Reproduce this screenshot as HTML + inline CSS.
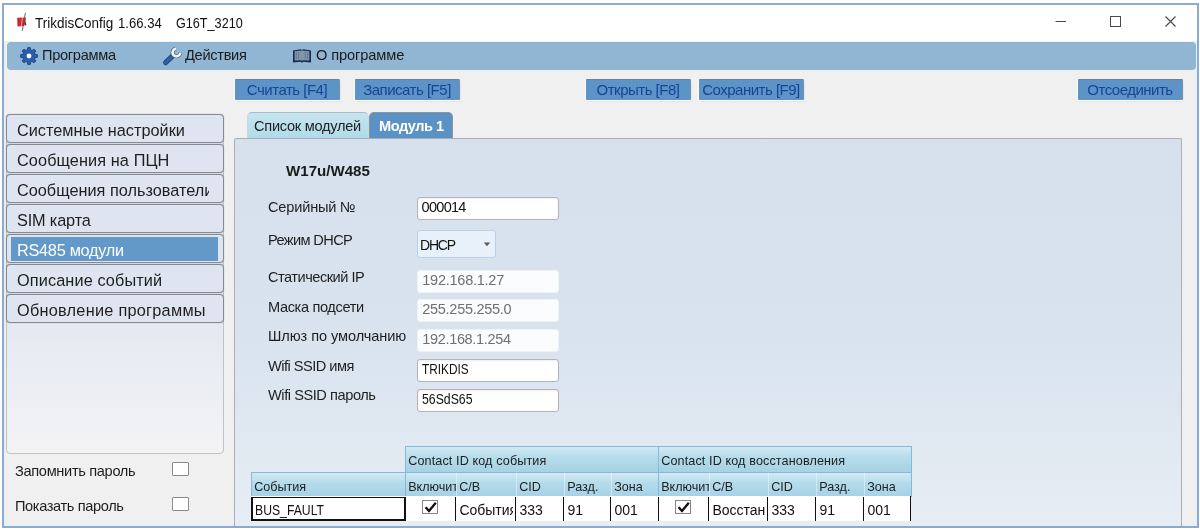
<!DOCTYPE html>
<html>
<head>
<meta charset="utf-8">
<title>TrikdisConfig</title>
<style>
*{box-sizing:border-box;margin:0;padding:0}
html,body{width:1200px;height:532px;overflow:hidden;background:#fff}
#root{position:absolute;left:0;top:0;width:1200px;height:532px;background:#fff;filter:blur(.4px)}
body{font-family:"Liberation Sans",sans-serif;font-size:14px;color:#1e1e1e;position:relative}
.abs{position:absolute;white-space:nowrap}
#win{left:2px;top:3px;width:1197px;height:525px;border:2px solid #8babcf;background:#f0f0f0;box-shadow:inset 0 0 0 1px #e4eff9}
#title{left:4px;top:5px;width:1193px;height:36px;background:#fff}
#ttext,.tt{top:15px;font-size:14.5px;line-height:16px;color:#111;white-space:pre}
#ttext{left:35px}
#menubar{left:7px;top:42px;width:1189px;height:28px;background:#91b6d3;border-radius:4px}
.mi{top:47px;font-size:14.6px;letter-spacing:-.3px;line-height:16px;color:#1b1b1b}
.tbtn{top:79px;height:21px;background:#5d94c7;border-top:1px solid #6e8199;border-right:1px solid #7f90a6;box-shadow:-1px 0 0 #fafafa,0 1px 0 #fdfdfd,1px 2px 1px #e2e4e7;color:#1a4394;font-size:15px;letter-spacing:-.5px;line-height:19px;text-align:center;border-radius:1px}
.sb{left:6px;width:218px;height:29px;background:#dfe5f0;border:1px solid #858a90;border-radius:4px;font-size:16.3px;line-height:29px;padding-top:1px;padding-left:10px;color:#1e1e1e;overflow:hidden;box-shadow:0 0 1px rgba(60,60,70,.45)}
.sb.sel{background:#dfe5f0 linear-gradient(#6299c9,#6299c9) no-repeat 4px 2px/207px 24px;color:#fff}
#sbpanel{left:6px;top:114px;width:218px;height:340px;border:1px solid #bfc3c8;border-radius:4px;background:linear-gradient(#e4e9f2 0,#e4e9f2 62%,#f3f3f4 100%)}
.lbl{left:268px;font-size:14.6px;letter-spacing:-.15px;line-height:16px;color:#1e1e1e}
.inp{left:417px;width:142px;height:23px;background:#fff;border:1px solid #b2b4b9;border-radius:3px;box-shadow:inset 0 1px 2px rgba(0,0,0,.07);font-size:14.5px;letter-spacing:-.74px;line-height:18px;padding-left:3.6px;color:#111}
.sx{display:inline-block;transform-origin:left center}
.inp.dis{box-shadow:none;border-color:#eef2f7;background:#fbfcfd;color:#707070;padding-left:4.3px;line-height:18.5px}
.cb{left:172px;width:17px;height:15px;background:#fff;border:1px solid #8b8b8b;border-radius:1px}
.th{background:linear-gradient(#d2e9f4,#b4dbea 45%,#a6d2e5);border:1px solid #86b9d6;font-size:12.6px;line-height:29.4px;color:#1e1e1e;overflow:hidden;padding-left:2.2px}
.td{top:497px;height:24px;background:#fff;border-left:1px solid #111;font-size:14px;line-height:27.5px;color:#111;overflow:hidden;padding-left:3.4px;clip-path:inset(0 2px 0 0)}
.chk{width:16px;height:14px;border:1px solid #868686;background:#fff;top:500px}
</style>
</head>
<body>
<div id="root">
<div id="win" class="abs"></div>
<div id="title" class="abs"></div>

<!-- app icon -->
<svg class="abs" style="left:16px;top:12px" width="12" height="20" viewBox="0 0 12 20">
  <path d="M1.2 5.7 L9.8 5.6 L9.6 10.5 L8 14.1 L1.5 14.4 Z" fill="#d3232c"/>
  <path d="M6.4 5.8 L5.2 14.4" stroke="#f0c4c6" stroke-width=".8" fill="none"/>
  <path d="M9.2 9.4 L10.5 12.8 L8.6 13.8 Z" fill="#3a3a3a"/>
  <path d="M9.4 0.8 L6.3 18.8" stroke="#555" stroke-width=".9" fill="none"/>
</svg>
<div id="ttext" class="abs"><span class="sx" style="transform:scaleX(.93)">TrikdisConfig</span></div>
<div id="ttext2" class="abs tt" style="left:118.4px"><span class="sx" style="transform:scaleX(.905)">1.66.34</span></div>
<div id="ttext3" class="abs tt" style="left:175.7px"><span class="sx" style="transform:scaleX(.871)">G16T_3210</span></div>

<!-- window controls -->
<svg class="abs" style="left:1050px;top:10px" width="140" height="24" viewBox="0 0 140 24">
  <path d="M5.5 11.5 H16" stroke="#4a4a4a" stroke-width="1" fill="none"/>
  <rect x="60.5" y="6.5" width="10" height="10" stroke="#4a4a4a" stroke-width="1" fill="none"/>
  <path d="M115.5 6.5 L125.5 16.5 M125.5 6.5 L115.5 16.5" stroke="#4a4a4a" stroke-width="1.1" fill="none"/>
</svg>

<!-- menu bar -->
<div id="menubar" class="abs"></div>
<svg class="abs" style="left:18.7px;top:46.2px" width="20" height="20" viewBox="0 0 20 20">
  <path d="M8.32 3.93 L8.65 1.61 L11.35 1.61 L11.68 3.93 L13.11 4.52 L14.98 3.11 L16.89 5.02 L15.48 6.89 L16.07 8.32 L18.39 8.65 L18.39 11.35 L16.07 11.68 L15.48 13.11 L16.89 14.98 L14.98 16.89 L13.11 15.48 L11.68 16.07 L11.35 18.39 L8.65 18.39 L8.32 16.07 L6.89 15.48 L5.02 16.89 L3.11 14.98 L4.52 13.11 L3.93 11.68 L1.61 11.35 L1.61 8.65 L3.93 8.32 L4.52 6.89 L3.11 5.02 L5.02 3.11 L6.89 4.52 Z" fill="#2b5eaa" stroke="#1f4682" stroke-width=".9" stroke-linejoin="round"/>
  <circle cx="10" cy="10" r="2.4" fill="#fdfdfe"/>
</svg>
<div class="abs mi" style="left:42px">Программа</div>
<svg class="abs" style="left:160px;top:44px" width="24" height="24" viewBox="0 0 24 24">
  <path d="M5.6 18.6 L13.2 11.4" stroke="#1a3d70" stroke-width="5" stroke-linecap="round" fill="none"/>
  <path d="M5.6 18.6 L13.2 11.4" stroke="#2d62a8" stroke-width="3.4" stroke-linecap="round" fill="none"/>
  <path d="M16.1 4.6 A3.9 3.9 0 1 0 20.3 8.8" stroke="#3b4c62" stroke-width="3.8" fill="none"/>
  <path d="M16.1 4.6 A3.9 3.9 0 1 0 20.3 8.8" stroke="#f1f3f6" stroke-width="2.6" fill="none"/>
</svg>
<div class="abs mi" style="left:185px">Действия</div>
<svg class="abs" style="left:292px;top:48px" width="20" height="16" viewBox="0 0 20 16">
  <path d="M1 2.4 L8.6 1.2 L10 2 L11.4 1.2 L19 2.4 L19 14.4 L11.4 13.8 L10 14.8 L8.6 13.8 L1 14.4 Z" fill="#1b2944"/>
  <path d="M2.6 3.2 L9.5 2.6 L9.5 12.2 L2.6 12.4 Z" fill="#7e94ac"/>
  <path d="M10.5 2.6 L17.4 3.2 L17.4 12.4 L10.5 12.2 Z" fill="#7e94ac"/>
  <path d="M10 2.6 V12.6" stroke="#c0d0df" stroke-width="1"/>
  <path d="M4.4 4.5 V11 M6.6 4.3 V11 M13.4 4.3 V11 M15.6 4.5 V11" stroke="#63798f" stroke-width=".9"/>
</svg>
<div class="abs mi" style="left:316px;letter-spacing:-.1px">О программе</div>

<!-- toolbar buttons -->
<div class="abs tbtn" style="left:235px;width:105px">Считать [F4]</div>
<div class="abs tbtn" style="left:355px;width:105px">Записать [F5]</div>
<div class="abs tbtn" style="left:586px;width:105px">Открыть [F8]</div>
<div class="abs tbtn" style="left:699px;width:105px">Сохранить [F9]</div>
<div class="abs tbtn" style="left:1078px;width:105px">Отсоединить</div>

<!-- sidebar -->
<div id="sbpanel" class="abs"></div>
<div class="abs sb" style="top:114px">Системные настройки</div>
<div class="abs sb" style="top:144px;letter-spacing:.09px">Сообщения на ПЦН</div>
<div class="abs sb" style="top:174px"><span style="display:block;width:192px;overflow:hidden">Сообщения пользователи</span></div>
<div class="abs sb" style="top:204px;letter-spacing:-.15px">SIM карта</div>
<div class="abs sb sel" style="top:234px;letter-spacing:-.27px">RS485 модули</div>
<div class="abs sb" style="top:264px;letter-spacing:.11px">Описание событий</div>
<div class="abs sb" style="top:294px;letter-spacing:.26px">Обновление программы</div>

<div class="abs" style="left:15px;top:462.6px;font-size:14.6px;letter-spacing:-.33px;line-height:16px">Запомнить пароль</div>
<div class="abs cb" style="top:462px;height:14px"></div>
<div class="abs" style="left:15px;top:498.2px;font-size:14.6px;letter-spacing:-.37px;line-height:16px">Показать пароль</div>
<div class="abs cb" style="top:497px;height:14px"></div>

<!-- tabs -->
<div class="abs" style="left:247px;top:112px;width:122px;height:27px;background:linear-gradient(#c6e5f0,#b0dae9);border:1px solid #c9d9e0;border-top-color:#a9bcc6;border-bottom:none;border-radius:5px 5px 0 0;font-size:14.6px;letter-spacing:-.27px;line-height:27px;padding-left:6px;color:#222">Список модулей</div>
<div class="abs" style="left:369px;top:112px;width:84px;height:27px;background:#5b92c6;border:1px solid #8d949c;border-bottom:none;border-radius:5px 5px 0 0;font-size:14.6px;letter-spacing:-.5px;font-weight:bold;line-height:27px;padding-left:9px;color:#fff">Модуль 1</div>

<!-- content panel -->
<div class="abs" style="left:234px;top:138px;width:948px;height:388px;background:linear-gradient(#d6e1ed 0,#d8e3ee 50%,#e7edf4 100%);border:1px solid #a9afb8;border-bottom:none;border-radius:2px 2px 0 0"></div>

<div class="abs" style="left:286px;top:162px;font-size:15.1px;font-weight:bold;line-height:18px;color:#1a1a1a">W17u/W485</div>

<div class="abs lbl" style="top:198.5px;letter-spacing:-.19px">Серийный №</div>
<div class="abs inp" style="top:197px;letter-spacing:-.72px">000014</div>

<div class="abs lbl" style="top:231.6px;letter-spacing:-.62px">Режим DHCP</div>
<div class="abs" style="left:417px;top:230px;width:79px;height:28px;background:#e8f0f9;border:1px solid #b9d2ec;border-radius:3px;font-size:14px;letter-spacing:-1.2px;line-height:28.5px;padding-left:2px;color:#111">DHCP</div>
<svg class="abs" style="left:483px;top:242px" width="8" height="5" viewBox="0 0 8 5"><path d="M0.8 0.5 L7.2 0.5 L4 4.3 Z" fill="#5a5a5a"/></svg>

<div class="abs lbl" style="top:269px;letter-spacing:-.5px">Статический IP</div>
<div class="abs inp dis" style="top:270px;letter-spacing:-.25px">192.168.1.27</div>
<div class="abs lbl" style="top:298.7px;letter-spacing:-.37px">Маска подсети</div>
<div class="abs inp dis" style="top:299px;letter-spacing:-.29px">255.255.255.0</div>
<div class="abs lbl" style="top:328.1px;letter-spacing:-.09px">Шлюз по умолчанию</div>
<div class="abs inp dis" style="top:329px;letter-spacing:-.34px">192.168.1.254</div>
<div class="abs lbl" style="top:357.6px;letter-spacing:-.52px">Wifi SSID имя</div>
<div class="abs inp" style="top:359px;letter-spacing:0"><span class="sx" style="transform:scaleX(.815)">TRIKDIS</span></div>
<div class="abs lbl" style="top:387.4px;letter-spacing:-.44px">Wifi SSID пароль</div>
<div class="abs inp" style="top:389px;letter-spacing:0"><span class="sx" style="transform:scaleX(.846)">56SdS65</span></div>

<!-- table -->
<div class="abs th" style="left:405px;top:446px;width:254px;height:27px;line-height:29px;letter-spacing:.12px">Contact ID код события</div>
<div class="abs th" style="left:658px;top:446px;width:254px;height:27px;line-height:29px;letter-spacing:.12px">Contact ID код восстановления</div>

<div class="abs th" style="left:251px;top:472px;width:155px;height:25px">События</div>
<div class="abs th" style="left:405px;top:472px;width:51px;height:25px;border-right:none">Включит</div>
<div class="abs th" style="left:456px;top:472px;width:60px;height:25px;border-left:1px solid rgba(255,255,255,.4);border-right:none">С/В</div>
<div class="abs th" style="left:516px;top:472px;width:48px;height:25px;border-left:1px solid rgba(255,255,255,.4);border-right:none">CID</div>
<div class="abs th" style="left:564px;top:472px;width:47px;height:25px;border-left:1px solid rgba(255,255,255,.4);border-right:none">Разд.</div>
<div class="abs th" style="left:611px;top:472px;width:48px;height:25px;border-left:1px solid rgba(255,255,255,.4)">Зона</div>
<div class="abs th" style="left:658px;top:472px;width:51px;height:25px;border-right:none">Включит</div>
<div class="abs th" style="left:709px;top:472px;width:59px;height:25px;border-left:1px solid rgba(255,255,255,.4);border-right:none">С/В</div>
<div class="abs th" style="left:768px;top:472px;width:48px;height:25px;border-left:1px solid rgba(255,255,255,.4);border-right:none">CID</div>
<div class="abs th" style="left:816px;top:472px;width:48px;height:25px;border-left:1px solid rgba(255,255,255,.4);border-right:none">Разд.</div>
<div class="abs th" style="left:864px;top:472px;width:48px;height:25px;border-left:1px solid rgba(255,255,255,.4)">Зона</div>

<div class="abs" style="left:251px;top:496px;width:660px;height:25px;background:#fff;border-right:1px solid #111"></div>
<div class="abs td" style="left:251px;width:155px;border:2px solid #111;border-top-width:1px;line-height:24.5px;padding-left:2px;clip-path:none"><span class="sx" style="transform:scaleX(.872)">BUS_FAULT</span></div>
<div class="abs td" style="left:455px;width:60px">События</div>
<div class="abs td" style="left:515px;width:48px">333</div>
<div class="abs td" style="left:563px;width:47px">91</div>
<div class="abs td" style="left:610px;width:48px">001</div>
<div class="abs td" style="left:658px;width:50px"></div>
<div class="abs td" style="left:708px;width:59px">Восстано</div>
<div class="abs td" style="left:767px;width:48px">333</div>
<div class="abs td" style="left:815px;width:48px">91</div>
<div class="abs td" style="left:863px;width:47px">001</div>

<div class="abs chk" style="left:422px"></div>
<svg class="abs" style="left:422px;top:500px" width="16" height="14" viewBox="0 0 16 14"><path d="M3.6 7.2 L7 11 L13.8 2.8" stroke="#111" stroke-width="2.3" fill="none"/></svg>
<div class="abs chk" style="left:675px"></div>
<svg class="abs" style="left:675px;top:500px" width="16" height="14" viewBox="0 0 16 14"><path d="M3.6 7.2 L7 11 L13.8 2.8" stroke="#111" stroke-width="2.3" fill="none"/></svg>

</div>
</body>
</html>
